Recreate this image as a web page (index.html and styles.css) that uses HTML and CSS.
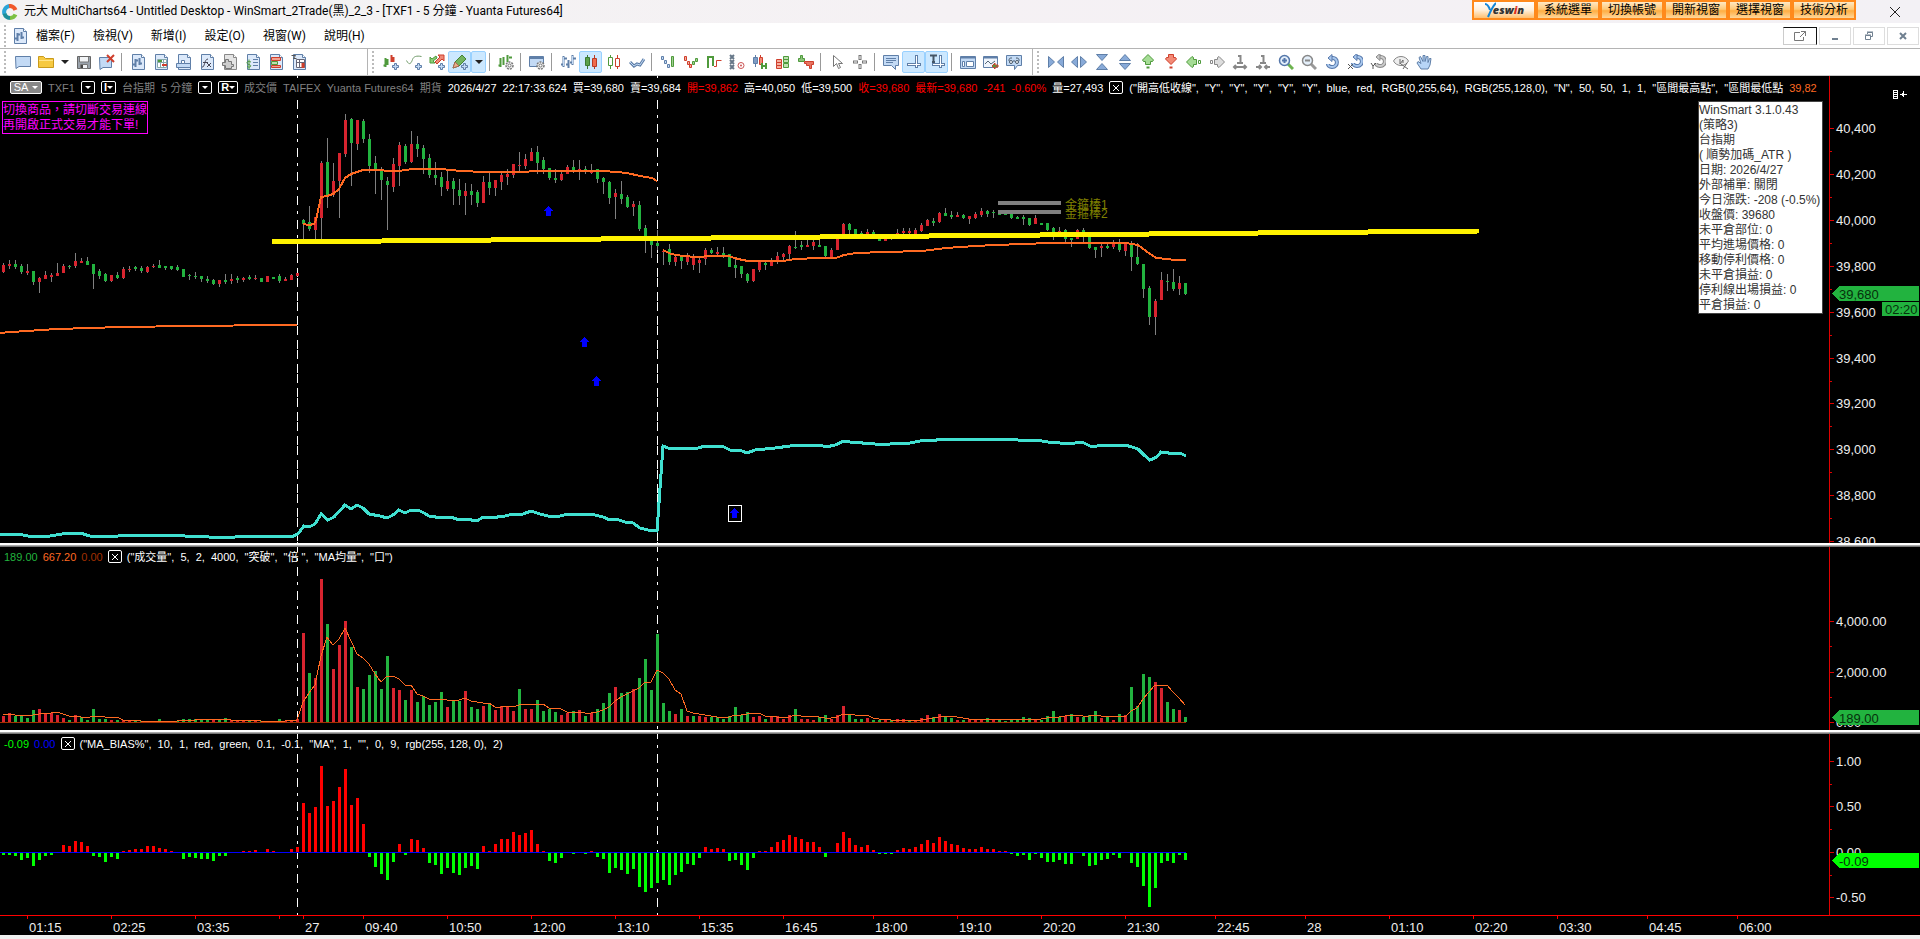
FILE: index.html
```
<!DOCTYPE html>
<html lang="zh-TW">

<head>
    <meta charset="UTF-8">
    <meta name="viewport" content="width=device-width, initial-scale=1.0">
    <title>元大 MultiCharts64</title>
    <link rel="stylesheet" href="styles.css">
</head>

<body>
    <header class="title-bar">
        <svg class="app-logo" viewBox="0 0 16 16">
            <path d="M8 2a6 6 0 0 0-5.500 8" fill="none" stroke="#2ba6d8" stroke-width="4" />
            <path d="M2.500 9.500A6 6 0 0 0 8 14" fill="none" stroke="#1d8f9b" stroke-width="4" />
            <path d="M8 14a6 6 0 0 0 5.500-3.500" fill="none" stroke="#7cc142" stroke-width="4" />
            <path d="M7 2a6 6 0 0 1 6.500 4" fill="none" stroke="#f1592a" stroke-width="4" />
        </svg>
        <h1>元大 MultiCharts64 - Untitled Desktop - WinSmart_2Trade(黑)_2_3 - [TXF1 - 5 分鐘 - Yuanta Futures64]</h1>
        <div class="yeswin-bar">
            <button class="brand"><svg viewBox="0 0 12 16"><path d="M1 2c3 0 4 3 5 6M12 1C9 4 7 8 4 15" fill="none" stroke="#1486d8" stroke-width="2" /></svg><span>esw<em>i</em>n</span></button>
            <button>系統選單</button>
            <button>切換帳號</button>
            <button>開新視窗</button>
            <button>選擇視窗</button>
            <button>技術分析</button>
        </div>
        <button class="close-btn" aria-label="關閉"><svg viewBox="0 0 12 12"><path d="M1 1l10 10M11 1L1 11" stroke="#222" fill="none" /></svg></button>
    </header>

    <nav class="menu-bar">
        <span class="grip"></span>
        <svg class="menu-icon" id="menuIcon" viewBox="0 0 16 16"></svg>
        <button>檔案(F)</button>
        <button>檢視(V)</button>
        <button>新增(I)</button>
        <button>設定(O)</button>
        <button>視窗(W)</button>
        <button>說明(H)</button>
        <div class="mdi-buttons">
            <button class="popout" aria-label="彈出"><svg viewBox="0 0 14 12"><path d="M7 2.500H1.500v8h9V7M8 1.500h4.500V6M12.500 1.500L7 7" fill="none" stroke="#777" /></svg></button>
            <button aria-label="最小化"><svg viewBox="0 0 14 12"><path d="M4 9h6" stroke="#708090" stroke-width="2" /></svg></button>
            <button aria-label="還原"><svg viewBox="0 0 14 12"><path d="M5.500 4V2.500h5v4H9M3.500 5.500h5v4h-5zM3 5h6M5 2h6" fill="none" stroke="#708090" /></svg></button>
            <button aria-label="關閉圖表"><svg viewBox="0 0 14 12"><path d="M4 3l6 6M10 3L4 9" stroke="#708090" stroke-width="2" /></svg></button>
        </div>
    </nav>

    <div class="toolbars">
        <div class="toolbar toolbar-file" id="toolbarFile"></div>
        <div class="toolbar toolbar-chart" id="toolbarChart"></div>
        <div class="toolbar" id="toolbarZoom"></div>
    </div>

    <main class="chart">
        <section class="pane pane-price">
            <svg class="plot" id="pricePlot"></svg>
            <svg class="axis" id="priceAxis"></svg>
            <div class="pane-header price-header">
                <button class="box sa">SA<i class="down"></i></button>
                <span class="dim">TXF1</span>
                <button class="box" aria-label="商品"><i class="down"></i></button>
                <button class="box">I<i class="down"></i></button>
                <span class="dim">台指期</span>
                <span class="dim">5 分鐘</span>
                <button class="box" aria-label="週期"><i class="down"></i></button>
                <button class="box">R<i class="down"></i></button>
                <span class="dim">成交價</span>
                <span class="dim">TAIFEX</span>
                <span class="dim">Yuanta Futures64</span>
                <span class="dim">期貨</span>
                <span>2026/4/27</span>
                <span>22:17:33.624</span>
                <span>買=39,680</span>
                <span>賣=39,684</span>
                <span class="down-text">開=39,862</span>
                <span>高=40,050</span>
                <span>低=39,500</span>
                <span class="down-text">收=39,680</span>
                <span class="down-text">最新=39,680</span>
                <span class="down-text">-241</span>
                <span class="down-text">-0.60%</span>
                <span>量=27,493</span>
                <button class="box x-box" aria-label="移除訊號"><svg viewBox="0 0 8 8"><path d="M1 1l6 6M7 1L1 7" stroke="#fff" /></svg></button>
                <span class="params">("開高低收線",  "Y",  "Y",  "Y",  "Y",  "Y",  blue,  red,  RGB(0,255,64),  RGB(255,128,0),  "N",  50,  50,  1,  1,  "區間最高點",  "區間最低點</span>
                <span class="ma-text">39,82</span>
            </div>
            <div class="notice">切換商品，請切斷交易連線<br>再開啟正式交易才能下單!</div>
            <div class="info-panel">
                <p>WinSmart 3.1.0.43</p>
                <p>(策略3)</p>
                <p>台指期</p>
                <p>( 順勢加碼_ATR )</p>
                <p>日期: 2026/4/27</p>
                <p>外部補單: 關閉</p>
                <p>今日漲跌: -208 (-0.5%)</p>
                <p>收盤價: 39680</p>
                <p>未平倉部位: 0</p>
                <p>平均進場價格: 0</p>
                <p>移動停利價格: 0</p>
                <p>未平倉損益: 0</p>
                <p>停利線出場損益: 0</p>
                <p>平倉損益: 0</p>
            </div>
        </section>
        <div class="splitter"></div>
        <section class="pane pane-volume">
            <svg class="plot" id="volumePlot"></svg>
            <svg class="axis" id="volumeAxis"></svg>
            <div class="pane-header">
                <span class="green-text">189.00</span>
                <span class="ma-text">667.20</span>
                <span class="brown-text">0.00</span>
                <button class="box x-box" aria-label="移除成交量"><svg viewBox="0 0 8 8"><path d="M1 1l6 6M7 1L1 7" stroke="#fff" /></svg></button>
                <span>("成交量",  5,  2,  4000,  "突破",  "倍 ",  "MA均量",  "口")</span>
            </div>
        </section>
        <div class="splitter"></div>
        <section class="pane pane-bias">
            <svg class="plot" id="biasPlot"></svg>
            <svg class="axis" id="biasAxis"></svg>
            <div class="pane-header">
                <span class="lime-text">-0.09</span>
                <span class="blue-text">0.00</span>
                <button class="box x-box" aria-label="移除乖離率"><svg viewBox="0 0 8 8"><path d="M1 1l6 6M7 1L1 7" stroke="#fff" /></svg></button>
                <span>("MA_BIAS%",  10,  1,  red,  green,  0.1,  -0.1,  "MA",  1,  "",  0,  9,  rgb(255, 128, 0),  2)</span>
            </div>
        </section>
        <svg class="time-axis" id="timeAxis"></svg>
    </main>
    <footer class="bottom-edge"></footer>

    <script src="icons.js"></script>
    <script src="chart.js"></script>
</body>

</html>
```
FILE: styles.css
```
:root {
    --up: #d8242f;
    --down: #22b33f;
    --ma: #ff6a22;
    --axis: #e00000;
    --highlight: #cce8ff;
    --highlight-border: #99d1ff;
    --ui-font: Roboto, "Noto Sans CJK TC", sans-serif;
    --chart-font: "Liberation Sans", "Noto Sans CJK TC", sans-serif;
}

* {
    margin: 0;
    padding: 0;
    box-sizing: border-box;
}

body {
    display: flex;
    flex-direction: column;
    min-height: 100vh;
    background: #fff;
    color: #000;
    font-family: var(--ui-font);
    font-size: 12px;
    overflow: hidden;
}

button {
    font: inherit;
    color: inherit;
    background: none;
    border: none;
}

svg {
    display: block;
}

/* 標題列 */
.title-bar {
    display: flex;
    align-items: center;
    height: 23px;
    padding-left: 2px;
    background: linear-gradient(to right, #f3f3f3, #f5f1f4 50%, #f3f1f5);
}

.app-logo {
    width: 16px;
    height: 16px;
    margin-right: 6px;
}

h1 {
    font-size: 12px;
    font-weight: 400;
    line-height: 23px;
    white-space: nowrap;
}

.yeswin-bar {
    display: flex;
    align-self: flex-start;
    margin-left: auto;
}

.yeswin-bar button {
    display: flex;
    align-items: center;
    justify-content: center;
    width: 64px;
    height: 20px;
    border: 2px solid #ff8a1c;
    background: linear-gradient(#ffe9c4, #ffc978 45%, #ffae42 55%, #ffd79a);
    line-height: 16px;
}

.yeswin-bar .brand {
    background: linear-gradient(#fff, #fff0dc 50%, #ffc070);
    font-family: "Open Sans", sans-serif;
    font-style: italic;
    font-weight: 800;
    font-size: 11px;
    color: #333;
}

.brand svg {
    width: 12px;
    height: 16px;
    margin-right: -3px;
}

.brand em {
    color: #e0301e;
}

.close-btn {
    width: 64px;
    height: 20px;
    padding-left: 33px;
}

.close-btn svg {
    width: 12px;
    height: 12px;
}

/* 選單列 */
.menu-bar {
    display: flex;
    align-items: center;
    height: 25px;
    padding-left: 4px;
}

.menu-bar > button {
    margin-right: 18px;
    line-height: 24px;
}

.menu-icon {
    width: 16px;
    height: 16px;
    margin: 0 8px 0 6px;
}

.grip {
    width: 2px;
    height: 22px;
    background: repeating-linear-gradient(#bbb 0 2px, transparent 2px 4px);
}

.mdi-buttons {
    display: flex;
    gap: 2px;
    margin-left: auto;
    margin-right: 1px;
}

.mdi-buttons button {
    display: flex;
    align-items: center;
    justify-content: center;
    width: 32px;
    height: 18px;
    border: 1px solid #ddd;
}

.mdi-buttons .popout {
    width: 34px;
    border-color: #111 #111 #ccc #ccc;
}

.mdi-buttons svg {
    width: 14px;
    height: 12px;
}

/* 工具列 */
.toolbars {
    display: flex;
    height: 28px;
    border-top: 1px solid #b4b4b4;
    border-bottom: 1px solid #c8c8c8;
}

.toolbar {
    display: flex;
    align-items: center;
    padding-left: 4px;
}

.toolbar .grip {
    margin-right: 5px;
}

.toolbar-file {
    width: 368px;
    border-right: 1px solid #b4b4b4;
}

.toolbar-chart {
    width: 665px;
    border-right: 1px solid #b4b4b4;
}

.tool {
    display: flex;
    align-items: center;
    justify-content: center;
    width: 23px;
    height: 22px;
}

.tool svg {
    width: 16px;
    height: 16px;
}

.tool.drop {
    width: 15px;
}

.tool.drop::before {
    content: "";
    border: 4px solid transparent;
    border-top: 4px solid #222;
    border-bottom: none;
}

.tool.on {
    background: var(--highlight);
    border: 1px solid var(--highlight-border);
    border-radius: 2px;
}

.separator {
    width: 1px;
    height: 18px;
    margin: 0 4px 0 3px;
    background: #999;
}

/* 圖表 */
.chart {
    flex: 1;
    display: flex;
    flex-direction: column;
    background: #000;
    color: #fff;
    font-family: var(--chart-font);
}

.pane {
    position: relative;
    display: flex;
    min-height: 0;
    overflow: hidden;
}

.pane-price {
    flex: 467 1 0;
}

.pane-volume {
    flex: 183 1 0;
}

.pane-bias {
    flex: 181 1 0;
}

.plot {
    flex: 1;
    min-width: 0;
    height: 100%;
    shape-rendering: crispEdges;
}

.axis {
    width: 91px;
    height: 100%;
    border-left: 1px solid var(--axis);
    shape-rendering: crispEdges;
}

.splitter {
    height: 4px;
    background: linear-gradient(#fff 0 2px, #aaa 2px 3px, #777 3px);
}

.pane-header {
    position: absolute;
    top: 0;
    left: 0;
    right: 91px;
    display: flex;
    align-items: center;
    gap: 5px;
    height: 19px;
    padding-left: 4px;
    font-size: 11px;
    line-height: 16px;
    white-space: pre;
    overflow: hidden;
}

.pane-header > * {
    flex-shrink: 0;
}

.price-header {
    top: 2px;
    gap: 6px;
    padding-left: 10px;
    background: #000;
}

.box {
    display: flex;
    align-items: center;
    justify-content: center;
    min-width: 14px;
    height: 13px;
    padding: 0 2px;
    border: 1px solid #fff;
    border-radius: 2px;
    font-weight: 700;
    line-height: 11px;
}

.box.sa {
    gap: 4px;
    min-width: 32px;
    background: #888;
    font-weight: 400;
}

.x-box svg {
    width: 8px;
    height: 8px;
}

.down {
    border: 3px solid transparent;
    border-top: 3px solid #fff;
    border-bottom: none;
}

.dim {
    color: #808080;
}

.down-text {
    color: #f00;
}

.ma-text {
    color: var(--ma);
}

.green-text {
    color: var(--down);
}

.brown-text {
    color: #a33000;
}

.lime-text {
    color: #0f0;
}

.blue-text {
    color: #00f;
}

.notice {
    position: absolute;
    top: 25px;
    left: 2px;
    width: 146px;
    padding-top: 1px;
    border: 1px solid #f0f;
    color: #f0f;
    font-size: 12px;
    line-height: 15px;
    white-space: nowrap;
}

.info-panel {
    position: absolute;
    top: 25px;
    right: 97px;
    width: 125px;
    padding-top: 1px;
    border: 1px solid #444;
    background: #fff;
    color: #333;
    font-size: 12px;
    line-height: 15px;
    white-space: nowrap;
}

.time-axis {
    width: 100%;
    height: 20px;
    border-top: 1px solid #f00;
    shape-rendering: crispEdges;
}

.axis-label {
    fill: #eee;
    font-size: 13px;
}

.tag-label {
    fill: #06300c;
    font-size: 13px;
}

.line-label {
    fill: #808000;
    font-size: 12px;
}

.bottom-edge {
    height: 4px;
    background: #f0f0f0;
}
```
FILE: icons.js
```
// 工具列圖示，全部畫在 16x16 的格子裡
const BLUE = '#5f7fa8';
const LIGHT = '#c3daf5';
const GREEN = '#4f9a3c';
const RED = '#cf3f2c';

const p = (d, stroke, fill = 'none', w = 1) =>
    `<path d="${d}" stroke="${stroke}" fill="${fill}" stroke-width="${w}"/>`;
const doc = p('M2.500 .5h9l3 3v12h-12z', BLUE, '#dce9fa') + p('M11.500 .5v3h3', BLUE, '#fff');
const grayDoc = p('M2.500 .5h9l3 3v12h-12z', '#888', '#e4e4e4') + p('M11.500 .5v3h3', '#888', '#fff');
const plus = p('M11.500 9.500h2v2h2v2h-2v2h-2v-2h-2v-2h2z', BLUE, LIGHT);
const gear = '<circle cx="11.500" cy="11.500" r="3.500" fill="#eee" stroke="#777" stroke-width="1.500" stroke-dasharray="2 1"/><circle cx="11.500" cy="11.500" r="1.500" fill="#fff" stroke="#777"/>';
const lens = (sign, rim, handle) =>
    p('M10 10l5 5', handle, 'none', 3) +
    `<circle cx="6.500" cy="6.500" r="5" fill="#e4effa" stroke="${rim}" stroke-width="1.500"/>` + p(sign, rim, 'none', 2);
const spin = (color, fill) => p('M8 4c6-1 7 9 0 9c-3 0-4-2-4-3', color, 'none', 4) + p('M8 4c6-1 7 9 0 9c-3 0-4-2-4-3', fill, 'none', 2) + p('M8 .5v7L4 4z', color, fill);

const ICONS = {
    fresh: p('M.5 2.500h15v10H4l-3 2z', BLUE, LIGHT),
    folder: p('M.5 2.500h5l2 2h8v9H.5z', '#c99a1b', '#f6c941') + p('M1 6.500h14', '#ffe48a'),
    save: p('M1.500 2.500h13v12h-13z', '#666', '#9aa3ac') + p('M3.500 3v5h9V3M4.500 10.500h7v4h-7z', '#777', '#f2f4f6') + p('M6 11v3', '#444', 'none', 2),
    remove: p('M.5 3.500h12v10H4l-3 2z', BLUE, LIGHT) + p('M8 1l7 7M15 1L8 8', RED, 'none', 2),
    chartDoc: doc + p('M5.500 5v8M3 10.500h2M6 6.500h2M9.500 4v7M10 9.500h2', BLUE, 'none', 2),
    gridDoc: doc + p('M4.500 5.500h9v8h-9zM4.500 8.500h9M7.500 5.500v8M10.500 5.500v8', '#8aa', '#fff') + p('M5 7h4', GREEN, 'none', 2) + p('M9 11h5', RED, 'none', 2),
    shapeDoc: doc + p('M.5 9.500h14v4H.5z', BLUE, LIGHT) + p('M5.500 6.500h3v3h-3z', BLUE, '#fff'),
    fxDoc: doc + p('M3 13c3 1 2-8 6-8M4 8.500h5M8 9l4 4M12 9l-4 4', '#445', 'none', 1),
    plugDoc: grayDoc + p('M.5 8.500h3v-3h3v2h3v3h2v2h-2v2h-6v-3h-3z', '#777', '#ccc'),
    dollarDoc: doc + p('M8 5.500h5M8 8.500h5M8 11.500h5', BLUE) + p('M6 8c-5-2-5 2-2 2.500s2 4-2 2M4 5.500v10', GREEN, 'none', 1),
    depthDoc: doc + p('M3.500 3.500h9v3h-9z', RED, '#f2a090') + p('M3.500 7.500h6v3h-6z', GREEN, '#bfe0b0') + p('M3.500 11.500h9v2h-9z', RED, '#f2a090'),
    scanDoc: doc + p('M5.500 5.500h8v8h-8zM8.500 5.500v8M5.500 8.500h8', '#667', '#fff') + p('M12 9v5', RED, 'none', 3) + p('M.5 1.500h4l-2 3h3', '#555'),
    addSeries: p('M2.500 4v9M4.500 5v6M.5 11.500h2', GREEN, 'none', 2) + p('M8.500 1v7M10.500 3v5', RED, 'none', 2) + plus,
    addStudy: p('M.5 6.500c3 6 5 2 6-1s4-4 9-3', '#6f9a68', 'none', 1) + plus,
    addSignal: p('M1 9V3l2 2 4-3 1 2-4 3 2 2z', GREEN, '#8ccf78') + p('M9 1h6v6l-2-2-5 5-2-2 5-5z', RED, '#ef8a78') + plus,
    draw: p('M1 14l2-6 7-7 4 4-7 7z', '#468236', '#72b45f') + p('M1 14l2-6 4 4z', '#a65', '#eab08a') + plus,
    format: p('M2.500 4v9M5.500 3v8M.5 11.500h2', GREEN, 'none', 2) + p('M9.500 1v7M11 3.500h3', GREEN, 'none', 2) + gear,
    windowGear: p('M.5 2.500h14v10H.5z', BLUE, LIGHT) + p('M1 4h13', BLUE, 'none', 2) + gear,
    ohlc: p('M3.500 2v11M1 10.500h2M4 4.500h3M8.500 6v8M8 10.500H6M12.500 1v10M10 8.500h2M13 4.500h3', BLUE, 'none', 2) + p('M3.500 3v9M12.500 2v8', LIGHT),
    candle: p('M4.500 1v14', '#3c7a34') + p('M2.500 3.500h4v8h-4z', '#3c7a34', '#5ba14b') + p('M11.500 1v14', '#b83a25') + p('M9.500 4.500h4v8h-4z', '#b83a25', '#f06a4c'),
    hollow: p('M4.500 1v14', GREEN) + p('M2.500 3.500h4v8h-4z', GREEN, '#fff') + p('M11.500 1v14', RED) + p('M9.500 4.500h4v8h-4z', RED, '#fff'),
    line: p('M1 8l4 4 3-2 3 1 4-6', BLUE, 'none', 3) + p('M1 8l4 4 3-2 3 1 4-6', LIGHT),
    renko: p('M1.500 2.500h2v3h-2zM4.500 6.500h2v3h-2zM7.500 10.500h2v3h-2z', BLUE, LIGHT) + p('M11.500 2.500h2v10h-2z', GREEN, '#9fcf90'),
    lineBreak: p('M1.500 2.500h2v4h-2zM4.500 7.500h2v3h-2zM6.500 10.500h2v3h-2z', RED, '#f6b0a0') + p('M9.500 7.500h2v3h-2zM12.500 4.500h2v3h-2z', GREEN, '#9fcf90'),
    kagi: p('M2 14V3h5v9', GREEN, 'none', 2) + p('M8 12.500h2.500v-6h5', RED, 'none', 1),
    pointFigure: p('M1 1l4 4M5 1L1 5M1 6l4 4M5 6l-4 4M1 11l4 4M5 11l-4 4', '#678', 'none', 2) + '<circle cx="12" cy="11.500" r="3" fill="#fff" stroke="#c55"/><circle cx="12" cy="11.500" r="1" fill="#c55"/>',
    heikin: p('M3.500 1v12', BLUE) + p('M1.500 3.500h4v6h-4z', BLUE, '#7e9cc4') + p('M8.500 1v10', RED) + p('M7.500 3.500h3v7h-3z', RED, '#f08a78') + p('M10 9v6M14 9v6M10 12h4', GREEN, 'none', 2),
    profile: p('M1.500 5.500h5v3h-5zM1.500 8.500h5v3h-5zM1.500 11.500h5v3h-5z', RED, '#f6b0a0') + p('M8.500 2.500h5v3h-5zM8.500 5.500h5v3h-5zM8.500 9.500h5v4h-5z', GREEN, '#bfe0b0'),
    delta: p('M.5 7.500v-3h2v-3h2v3h2v3z', GREEN, '#8cc37c') + p('M6.500 7.500h9v3h-2v4h-2v-3h-3v-2h-2z', RED, '#e77462'),
    pointer: p('M4.500 1.500v11l3-3 2 5 2-1-2-4h4z', '#777', '#fff'),
    cross: p('M8 1v5M8 10v5M1 8h5M10 8h5', '#777', 'none', 3) + p('M8 2v3M8 11v3M2 8h3M11 8h3', '#fff'),
    hint: p('M.5 1.500h15v10h-3v4l-4-4h-8z', BLUE, LIGHT) + p('M3 4.500h10M3 6.500h10M3 8.500h7', BLUE),
    track: p('M10.500 1v13M1 10.500h14', BLUE, 'none', 3) + p('M10.500 2v11M2 10.500h12', '#fff'),
    trackText: p('M11.500 1v13M3 10.500h13', BLUE, 'none', 3) + p('M11.500 2v11M4 10.500h11', '#fff') + p('M1 1.500h7M4.500 1v7M3 8h3', '#456', 'none', 2),
    dataWindow: p('M.5 2.500h15v12H.5z', BLUE, LIGHT) + p('M1 3.500h14', BLUE, 'none', 2) + p('M2.500 7.500h2v5h-2zM6.500 7.500h7v5h-7z', BLUE, '#fff'),
    chartWindow: p('M.5 2.500h14v11H.5z', BLUE, '#eef4fc') + p('M1 3.500h13', BLUE, 'none', 2) + p('M2 10l3-3 3 3 4-3', '#567') + p('M9 12l3-3v2h3v2h-3v2z', RED, GREEN),
    watch: p('M.5 1.500h15v10h-4l-3 4v-4h-8z', BLUE, LIGHT) + p('M3 7c0-3 1-3 3-3M10 4c3 0 3 1 3 3M7 7h2', '#456') + '<circle cx="5" cy="8" r="1.500" fill="#fff" stroke="#456"/><circle cx="11" cy="8" r="1.500" fill="#fff" stroke="#456"/>',
    squeezeX: p('M.5 2.500v11l6-5.500zM15.500 2.500v11L9.500 8z', BLUE, '#88aad8'),
    expandX: p('M6.500 2.500v11L.5 8zM9.500 2.500v11l6-5.500z', BLUE, '#88aad8'),
    squeezeY: p('M2.500 .5h11L8 6.500zM2.500 15.500h11L8 9.500z', BLUE, '#88aad8'),
    expandY: p('M2.500 6.500h11L8 .5zM2.500 9.500h11L8 15.500z', BLUE, '#88aad8'),
    up: p('M8 .5l5.500 5.500-1 1.500h-2v3h-5v-3h-2L2.500 6z', GREEN, '#a5dc95') + p('M6.500 13.500h3', GREEN, 'none', 2),
    downArrow: p('M8 10.500L2.500 5l1-1.500h2v-3h5v3h2L13.500 5z', RED, '#f28a76') + p('M6.500 13.500h3', RED, 'none', 2),
    left: p('M.5 8L6 2.500l1.500 1v2h3v5h-3v2l-1.500 1z', GREEN, '#a5dc95') + p('M12.500 6.500h2v3h-2z', GREEN, '#fff'),
    right: p('M15.500 8L10 2.500l-1.500 1v2h-3v5h3v2l1.500 1z', '#888', '#ddd') + p('M1.500 6.500h2v3h-2z', '#888', '#fff'),
    scaleOut: p('M6 2h2.500v7M5 9h6M2 13h12M4 11l-2 2 2 2M12 11l2 2-2 2', '#888', 'none', 2),
    scaleIn: p('M6 2h2.500v7M5 9h6M1 13h5M10 13h5M4 11l2 2-2 2M12 11l-2 2 2 2', '#888', 'none', 2),
    zoomIn: lens('M4 6.500h5M6.500 4v5', '#5577aa', '#6db34f'),
    zoomOut: lens('M4 6.500h5', '#888', '#999'),
    reset: spin('#5577aa', '#a9c8ee'),
    resetX: '<g transform="translate(2 -1)">' + spin('#5577aa', '#a9c8ee') + '</g>' + p('M1 10l5 5M6 10l-5 5', '#555', 'none', 1),
    resetY: '<g transform="translate(2 -1)">' + spin('#888', '#ccc') + '</g>' + p('M1 9l2 3 3-3M3 12v3', '#555', 'none', 1),
    eye: p('M.5 7c3-6 12-6 15 0c-3 6-12 6-15 0z', '#888', '#eee') + p('M7 5v5l3-4v3M8 10l7 5M14 9l-4 6', '#666', 'none', 1),
    hand: p('M5 15L1 9l1-1.500 3 2-2-6 1.500-1 2.500 5V1.500h2v6l1.500-5h1.500v6l1.500-4h1.500L14 11l-2 4z', BLUE, '#b7d5f7'),
};

// "|" 分隔線，"v" 下拉，開頭 "*" 為按下狀態
const TOOLBARS = {
    toolbarFile: 'fresh folder v save remove | chartDoc gridDoc shapeDoc fxDoc plugDoc dollarDoc depthDoc scanDoc',
    toolbarChart: 'addSeries addStudy addSignal *draw *v | format | windowGear | ohlc *candle hollow line | renko lineBreak kagi pointFigure heikin profile delta | pointer cross | hint *track *trackText | dataWindow chartWindow watch',
    toolbarZoom: 'squeezeX expandX squeezeY expandY up downArrow left right scaleOut scaleIn zoomIn zoomOut reset resetX resetY eye hand',
};

for (const [id, list] of Object.entries(TOOLBARS)) {
    let html = '<span class="grip"></span>';
    for (const item of list.split(' ')) {
        const on = item[0] === '*' ? ' on' : '';
        const name = item.replace('*', '');
        if (name === '|') {
            html += '<span class="separator"></span>';
        } else if (name === 'v') {
            html += `<button class="tool drop${on}" aria-label="more"></button>`;
        } else {
            html += `<button class="tool${on}" aria-label="${name}"><svg viewBox="0 0 16 16">${ICONS[name]}</svg></button>`;
        }
    }
    document.getElementById(id).innerHTML = html;
}
document.getElementById('menuIcon').innerHTML = ICONS.chartDoc;
```
FILE: chart.js
```
const BAR_STEP = 6;
const PRICE_TOP = 24;
const SESSION_LINES = [297, 657];

// 每根K棒: 高 開 收 低
const candles = `
163 172 165 173,160 166 164 169,160 164 167 169,164 166 172 174,164 173 171 175,171 171 182 185,177 182 178 193,171 179 175 179,173 177 175 182,163 176 173 176,
164 173 166 173,165 166 167 169,153 166 161 168,158 163 161 163,157 161 165 165,164 164 174 189,169 171 176 179,173 174 181 182,175 181 175 182,172 175 178 179,
167 178 169 179,166 170 169 172,166 167 169 171,166 168 171 173,166 172 167 173,164 167 166 168,160 165 168 168,166 166 168 170,166 166 169 170,165 167 170 171,
169 169 177 177,174 175 176 180,172 176 177 179,176 176 179 182,176 179 181 183,179 180 184 185,180 184 180 187,174 180 182 184,174 181 179 184,176 178 180 183,
177 180 178 182,175 177 179 180,175 179 178 180,178 178 182 182,176 182 176 182,177 177 179 179,174 176 181 183,177 181 179 181,174 180 175 180,173 176 173 176,
119 120 124 140,106 122 129 131,117 130 117 139,61 118 63 139,38 62 96 108,63 95 81 97,53 81 53 118,14 54 20 57,18 19 43 86,20 44 20 50,
19 21 39 43,34 39 66 73,56 63 69 94,67 69 80 100,77 81 85 130,58 87 64 92,42 66 45 86,44 46 62 64,31 62 44 63,36 44 49 57,
45 48 59 74,54 58 75 78,62 75 78 85,72 77 87 96,71 89 81 91,78 81 89 105,79 90 96 105,83 96 91 115,84 91 95 105,90 92 103 107,
76 103 82 103,73 82 88 95,80 88 80 96,73 82 75 90,69 77 74 85,64 75 64 78,52 66 65 71,54 66 59 69,48 61 52 61,46 52 63 74,
57 60 69 74,68 68 78 80,69 78 80 83,72 80 74 81,65 74 67 74,60 67 70 73,60 70 69 80,66 69 71 74,64 73 70 74,69 69 79 83,
77 78 82 94,81 82 98 104,89 97 93 119,81 94 99 104,95 97 107 108,101 107 104 116,101 105 129 131,125 128 137 153,136 140 145 158,130 143 146 150,
149 152 151 165,144 149 162 165,156 162 157 166,155 156 161 169,153 162 156 165,154 165 156 170,158 163 160 173,148 159 150 165,148 150 153 154,147 154 152 156,
147 153 155 158,154 154 167 167,158 165 168 178,166 166 174 178,173 174 181 183,169 181 169 182,161 170 162 172,161 163 165 170,158 166 161 166,152 161 156 164,
153 157 154 160,145 154 146 159,131 147 148 149,141 145 147 150,140 147 145 147,139 146 142 150,138 145 147 147,146 146 156 158,148 157 150 157,136 150 136 150,
123 137 124 137,123 124 130 135,129 129 134 134,131 133 135 135,129 135 132 135,130 132 134 135,134 136 141 141,135 141 138 141,134 139 136 140,129 137 133 137,
128 133 131 134,128 133 131 134,128 135 130 135,123 131 125 132,119 126 120 126,118 121 123 126,112 122 113 123,108 113 116 116,111 115 117 119,112 117 115 117,
114 115 118 119,116 119 116 124,112 118 114 119,108 115 111 117,110 111 114 117,110 112 113 118,111 113 115 115,113 113 115 115,114 114 118 119,116 117 119 119,
115 117 119 125,118 118 125 126,115 124 118 124,123 123 125 125,123 123 130 131,127 128 132 140,127 133 131 133,129 130 139 142,138 138 140 147,129 139 130 139,
128 130 136 142,136 136 148 149,147 147 150 158,143 148 146 157,144 146 148 149,140 147 143 149,139 143 150 152,143 151 144 156,141 145 157 171,143 157 164 165,
164 164 189 198,186 188 217 225,199 217 201 235,172 200 180 200,174 181 182 191,169 182 189 191,176 189 183 195,183 183 194 195`
    .trim().split(',').map(row => row.trim().split(' ').map(Number));

// 正值紅柱，負值綠柱
const volumes = [
    6, 9, -6, -6, -4, -12, 13, 9, 9, 7, 4, -2, 7, -5, -2, -13, -3, -3, 2, -2, 2, 1, -1, -1, 1,
    1, -3, -1, -1, -1, -3, -3, -3, -3, -2, 2, -2, -4, 2, 2, 1, -2, 1, -1, 1, 1, -3, 1, 2, 3,
    89, -49, 44, 143, -98, 53, 77, 101, -75, 35, -33, -47, -51, -33, -66, 34, 32, -22, 32, -20, -26, -17, -20, -30, 15,
    -22, -21, 31, -15, -13, 16, -19, 12, 16, 15, 11, -33, 13, 13, -22, -11, -13, -10, 7, 9, -11, 12, -6, 9, -13,
    -19, -29, 35, -29, -30, 33, -44, -63, -32, -88, -19, -11, 8, -13, 6, -6, 6, 5, -5, -5, -3, -6, -15, -7, -10,
    5, 6, -3, 6, 6, 3, 7, -13, 3, 3, 2, -5, -7, 3, 7, 16, -8, -3, -3, 4, -2, -2, 2, -2, 3,
    3, -1, 1, 4, 7, -5, 8, -6, -4, 2, -2, 3, 3, 3, -4, 3, -2, -1, -3, -2, -5, -4, 3, -2, -6,
    -11, -5, 6, -8, 5, -5, -7, -11, 4, -5, 2, -8, 7, -35, -16, -48, -45, 40, 34, -20, -13, 12, -5
];

const bias = [
    -2, -2, -3, -7, -5, -13, -7, -3, -2, 0, 7, 6, 11, 10, 6, -3, -4, -9, -4, -6, 1, 2, 3, 3, 6,
    6, 4, 3, 1, 0, -6, -4, -5, -6, -6, -8, -3, -3, 0, 0, 1, 1, 2, 0, 3, 1, 0, 0, 3, 5,
    49, 39, 45, 86, 46, 51, 65, 83, 47, 54, 28, -4, -14, -21, -27, -9, 8, -2, 13, 12, 4, -10, -12, -21, -15,
    -20, -22, -15, -13, -16, 6, 1, 8, 13, 13, 20, 17, 19, 22, 8, 1, -8, -10, -5, 0, -1, 0, -1, 1, -4,
    -6, -20, -15, -17, -21, -16, -34, -39, -35, -30, -27, -32, -22, -19, -11, -12, -5, 5, 3, 4, 3, -8, -7, -12, -17,
    -5, 1, 1, 5, 10, 12, 17, 15, 13, 10, 10, 5, -4, 0, 9, 20, 14, 7, 5, 7, 2, -1, -1, -1, 2,
    4, 3, 5, 8, 12, 9, 15, 11, 8, 7, 4, 3, 3, 5, 3, 3, 1, 1, -1, -3, -2, -7, -1, -5, -9,
    -9, -7, -11, -11, 0, -3, -13, -12, -7, -6, -2, -5, 0, -10, -14, -33, -54, -35, -10, -8, -10, -2, -7
];

const maLines = [
    '0,233 10,232 28,231 40,230 58,229 88,228 123,227 189,226 280,225 297,225',
    '303,124 309,125 314,124 316,120 321,97 327,96 333,94 339,89 345,78 351,74 363,70 380,70 388,71 399,71 412,69 441,69 461,71 484,72 524,72 535,71 603,71 616,72 627,73 640,76 652,78 657,81',
    '663,150 671,154 683,156 697,157 711,156 728,156 738,159 748,161 783,161 795,159 820,158 836,158 844,155 856,153 885,152 922,151 946,148 975,146 995,145 1024,144 1048,143 1126,143 1138,145 1146,151 1156,158 1167,159 1175,160 1186,160'
];

const equityLine = '0,435 18,434 28,436 33,437 50,436 62,434 80,433 90,436 105,437 118,436 145,435 170,435 185,436 205,436 213,438 235,437 255,436 262,437 275,436 291,437 298,434 304,426 309,427 315,424 321,414 328,420 334,417 345,405 351,409 357,405 363,408 369,414 380,416 387,418 393,415 399,410 405,413 411,410 418,410 424,413 429,416 442,418 450,417 460,420 466,419 477,421 483,417 490,418 505,416 513,414 523,414 531,411 540,414 548,416 556,417 568,414 595,415 603,417 610,420 616,419 625,422 633,423 640,428 648,430 657,431 663,346 668,348 690,348 695,349 705,346 724,347 730,350 742,351 747,353 755,350 775,348 790,346 815,345 820,345 826,347 835,345 844,341 850,342 875,344 890,344 910,343 920,341 928,340 933,341 940,339 960,339 965,340 975,339 1008,339 1028,341 1036,340 1048,342 1072,344 1078,342 1084,343 1090,346 1097,346 1102,345 1107,346 1113,345 1119,346 1125,345 1132,347 1138,349 1144,355 1150,360 1157,357 1161,352 1176,354 1180,353 1186,356';

const rect = (x, y, w, h, fill) => `<rect x="${x}" y="${y}" width="${w}" height="${h}" fill="${fill}"/>`;
const line = (points, color, width) =>
    `<polyline points="${points}" fill="none" stroke="${color}" stroke-width="${width}"/>`;
const dashed = (y1, y2, dash, offset = 0) => SESSION_LINES.map(x =>
    `<line x1="${x + 0.5}" x2="${x + 0.5}" y1="${y1}" y2="${y2}" stroke="#fff" stroke-dasharray="${dash}" stroke-dashoffset="${offset}"/>`).join('');
const arrow = (x, y) => `<path d="M${x} ${y - 1}l5 5h-2v5h-5v-5h-2z" fill="#00f"/>`;

function drawPrice() {
    let svg = dashed(0, 168, '9 6 3 6') + dashed(168, 467, '9 1 9 5');
    svg += `<g transform="translate(0 ${PRICE_TOP})">`;
    candles.forEach(([high, open, close, low], i) => {
        const color = close < open ? 'var(--up)' : 'var(--down)';
        svg += rect(i * BAR_STEP + 3, high, 1, low - high, '#808080');
        svg += rect(i * BAR_STEP + 2, Math.min(open, close), 3, Math.abs(close - open), color);
    });
    maLines.forEach(points => svg += line(points, 'var(--ma)', 2));
    svg += line(equityLine, '#40e0d0', 3);
    svg += line('272,142 1479,131', '#fff200', 5);
    svg += rect(998, 101, 63, 4, '#808080') + rect(998, 110, 63, 4, '#808080');
    svg += '<text class="line-label" x="1065" y="109">金箍棒1</text><text class="line-label" x="1065" y="118">金箍棒2</text>';
    svg += arrow(548, 107) + arrow(584, 238) + arrow(596, 277) + arrow(734, 409);
    svg += '<rect x="728.5" y="405.5" width="13" height="16" fill="none" stroke="#fff"/></g>';
    document.getElementById('pricePlot').innerHTML = svg;
}

function drawVolume() {
    const base = 175;
    let svg = dashed(0, 183, '9 6 3 6', 4);
    const average = [];
    volumes.forEach((v, i) => {
        const h = Math.abs(v);
        svg += rect(i * BAR_STEP + 2, base - h, 3, h, v > 0 ? 'var(--up)' : 'var(--down)');
        let sum = 0;
        for (let k = i - 4; k <= i; k++) sum += k < 0 ? 8 : Math.abs(volumes[k]);
        average.push(`${i * BAR_STEP + 3},${Math.round(base - sum / 5)}`);
    });
    svg += rect(0, base, volumes.length * BAR_STEP - 2, 1, '#a33000') + line(average.join(' '), 'var(--ma)', 1);
    document.getElementById('volumePlot').innerHTML = svg;
}

function drawBias() {
    const zero = 118;
    let svg = dashed(0, 181, '9 6 3 6', 4);
    bias.forEach((v, i) => {
        svg += v > 0 ? rect(i * BAR_STEP + 2, zero - v, 3, v, '#f00') : rect(i * BAR_STEP + 2, zero + 1, 3, -v, '#0f0');
    });
    svg += rect(0, zero, bias.length * BAR_STEP - 2, 1, '#00f');
    document.getElementById('biasPlot').innerHTML = svg;
}

// labels 由上而下，step 是兩個刻度的距離
function drawAxis(id, top, step, labels, tag) {
    let svg = '';
    labels.forEach((label, i) => {
        const y = Math.round(top + i * step);
        svg += rect(0, y, 4, 1, 'var(--axis)') + rect(0, Math.round(y + step / 2), 2, 1, 'var(--axis)');
        svg += `<text class="axis-label" x="6" y="${y + 5}">${label}</text>`;
    });
    svg += `<path d="M2 ${tag.y + 7}l7 -7H89v15H9z" fill="${tag.color}"/>`;
    svg += `<text class="tag-label" x="9" y="${tag.y + 13}">${tag.text}</text>`;
    if (tag.timer) {
        svg += rect(52, tag.y + 16, 37, 14, tag.color);
        svg += `<text class="tag-label" x="55" y="${tag.y + 28}">${tag.timer}</text>`;
    }
    document.getElementById(id).innerHTML = svg;
}

function drawTimeAxis() {
    const ticks = [
        [27, '01:15'], [111, '02:25'], [195, '03:35'], [279, ''], [303, '27'], [363, '09:40'], [447, '10:50'],
        [531, '12:00'], [615, '13:10'], [699, '15:35'], [783, '16:45'], [873, '18:00'], [957, '19:10'], [1041, '20:20'],
        [1125, '21:30'], [1215, '22:45'], [1305, '28'], [1389, '01:10'], [1473, '02:20'], [1557, '03:30'],
        [1647, '04:45'], [1737, '06:00']
    ];
    document.getElementById('timeAxis').innerHTML = ticks.map(([x, label]) =>
        rect(x, 0, 1, 3, '#f00') + `<text class="axis-label" x="${x + 2}" y="16">${label}</text>`).join('');
}

drawPrice();
drawVolume();
drawBias();
drawAxis('priceAxis', 52, 45.9, ['40,400', '40,200', '40,000', '39,800', '39,600', '39,400', '39,200', '39,000', '38,800', '38,600'],
    { y: 210, text: '39,680', color: '#22b33f', timer: '02:20' });
drawAxis('volumeAxis', 74, 50.5, ['4,000.00', '2,000.00', '0.00'], { y: 163, text: '189.00', color: '#22b33f' });
drawAxis('biasAxis', 27, 45.3, ['1.00', '0.50', '0.00', '-0.50'], { y: 119, text: '-0.09', color: '#0f0' });
document.getElementById('priceAxis').innerHTML +=
    '<path d="M63 14h4M63 16h4M63 18h4M63 20h4M63 22h4M63 14v9M67 14v9M70 18h7M73 15v6M72 17v3" stroke="#fff" fill="none"/>';
drawTimeAxis();
```
